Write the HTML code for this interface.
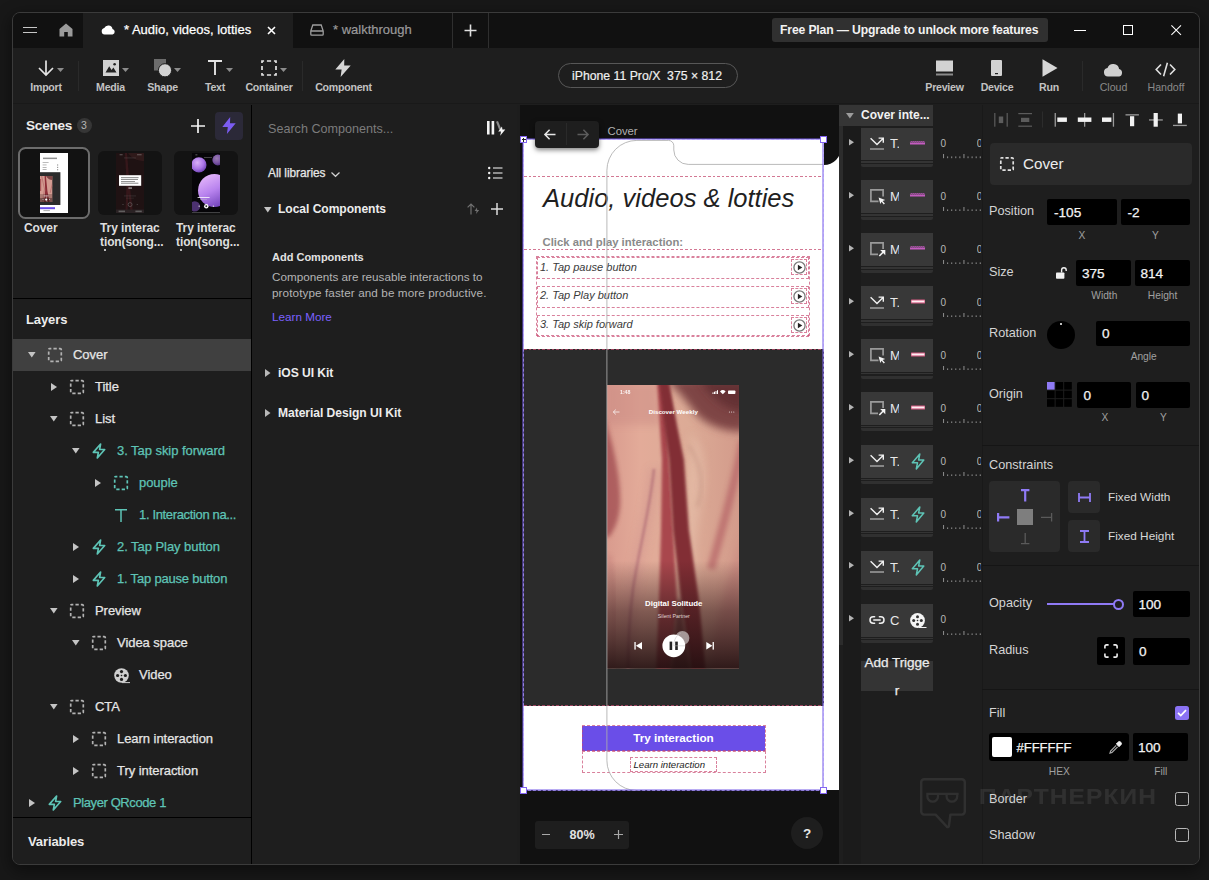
<!DOCTYPE html>
<html lang="en">
<head>
<meta charset="utf-8">
<title>Audio, videos, lotties</title>
<style>
*{box-sizing:border-box;margin:0;padding:0}
html,body{width:1209px;height:880px;overflow:hidden;background:#181818}
body{font-family:"Liberation Sans",sans-serif;color:#e6e6e6;font-size:13px;position:relative;-webkit-font-smoothing:antialiased}
.abs{position:absolute}
#win{position:absolute;left:12px;top:12px;width:1188px;height:853px;background:#1e1e1e;border:1px solid #3b3b3b;border-radius:8px;overflow:hidden;box-shadow:0 5px 16px 2px rgba(0,0,0,.42)}
/* everything inside #win is positioned in PAGE coordinates via this shim */
#pg{position:absolute;left:-13px;top:-13px;width:1209px;height:880px}
#pg *{position:absolute}
.t{white-space:nowrap;line-height:1}
svg{overflow:visible}
/* tab bar */
#tabbar{left:13px;top:13px;width:1187px;height:35px;background:#111}
#tab1{left:83px;top:13px;width:210px;height:35px;background:#1e1e1e}
.vsep{width:1px;background:#2f2f2f}
/* toolbar */
#toolbar{left:13px;top:48px;width:1187px;height:55px;background:#1e1e1e}
.tl{font-size:10.6px;color:#c2c2c2;font-weight:bold;letter-spacing:-.25px;transform:translateX(-50%)}
.tl.dim{color:#8a8a8a}
.lt{font-size:13px;letter-spacing:-.05px;-webkit-text-stroke:.25px currentColor}
.db{border:1px dashed rgba(200,70,110,.68)}
</style>
</head>
<body>
<div id="win"><div id="pg">

<!-- ============ TAB BAR ============ -->
<div id="tabbar"></div>
<div id="tab1"></div>
<div class="vsep" style="left:452px;top:13px;height:35px"></div>
<div class="vsep" style="left:488px;top:13px;height:35px"></div>
<!-- hamburger -->
<div style="left:23px;top:27px;width:14px;height:1px;background:#c6c6c6"></div>
<div style="left:23px;top:32.4px;width:14px;height:1px;background:#c6c6c6"></div>
<!-- home -->
<svg style="left:59px;top:23px" width="14" height="14" viewBox="0 0 14 14"><path d="M0.5 6 L7 0.5 L13.5 6 V13.5 H8.8 V9 H5.2 V13.5 H0.5 Z" fill="#9a9a9a"/></svg>
<!-- cloud -->
<svg style="left:101px;top:24px" width="15" height="11" viewBox="0 0 15 11"><path d="M3.6 10.6 a3.3 3.3 0 0 1 -.3 -6.5 a4.3 4.3 0 0 1 8.2 .9 a2.9 2.9 0 0 1 .1 5.6 z" fill="#fff"/></svg>
<div class="t" style="left:124px;top:23px;font-size:13px;color:#fff;-webkit-text-stroke:.25px #fff">* Audio, videos, lotties</div>
<svg style="left:267px;top:26px" width="9" height="9" viewBox="0 0 9 9"><path d="M1 1 L8 8 M8 1 L1 8" stroke="#fff" stroke-width="1.6" fill="none"/></svg>
<!-- drive icon -->
<svg style="left:310px;top:24px" width="14" height="12" viewBox="0 0 14 12"><path d="M0.8 7 L2.8 1 H11.2 L13.2 7 V10.2 a.9 .9 0 0 1 -.9 .9 H1.7 a.9 .9 0 0 1 -.9 -.9 Z M0.8 7 H13.2" fill="none" stroke="#9e9e9e" stroke-width="1.3"/></svg>
<div class="t" style="left:333px;top:23px;font-size:13px;color:#9a9a9a;-webkit-text-stroke:.2px #9a9a9a">* walkthrough</div>
<svg style="left:464px;top:24px" width="13" height="13" viewBox="0 0 13 13"><path d="M6.5 0.5 V12.5 M0.5 6.5 H12.5" stroke="#e0e0e0" stroke-width="1.6" fill="none"/></svg>
<!-- upgrade -->
<div style="left:772px;top:18px;width:276px;height:24px;background:#303030;border-radius:3px"></div>
<div class="t" style="left:780px;top:23.5px;font-size:12.2px;color:#f2f2f2;font-weight:bold;letter-spacing:-.15px">Free Plan — Upgrade to unlock more features</div>
<!-- window controls -->
<div style="left:1074px;top:30px;width:12.4px;height:1px;background:#fff"></div>
<div style="left:1123px;top:25px;width:10.4px;height:10.2px;border:1.2px solid #fff"></div>
<svg style="left:1171px;top:25px" width="10.4" height="10.4" viewBox="0 0 10.4 10.4"><path d="M0.4 0.4 L10 10 M10 0.4 L0.4 10" stroke="#fff" stroke-width="1.05" fill="none"/></svg>

<!-- ============ TOOLBAR ============ -->
<div id="toolbar"></div>
<div style="left:13px;top:103px;width:1187px;height:2px;background:#1e1e1e"></div><div style="left:13px;top:103px;width:1187px;height:1px;background:#191919"></div>
<div class="vsep" style="left:78px;top:61px;height:30px;background:#2a2a2a"></div>
<div class="vsep" style="left:302px;top:61px;height:30px;background:#2a2a2a"></div>
<div class="vsep" style="left:1082px;top:61px;height:30px;background:#2a2a2a"></div>
<!-- Import -->
<svg style="left:38px;top:60px" width="16" height="16" viewBox="0 0 16 16"><path d="M8 0.5 V14.5 M1 8 L8 15 L15 8" fill="none" stroke="#e4e4e4" stroke-width="1.7"/></svg>
<svg class="dd" style="left:57px;top:68px" width="7" height="4" viewBox="0 0 7 4"><path d="M0 0 H7 L3.5 4 Z" fill="#8c8c8c"/></svg>
<div class="t tl" style="left:46px;top:82px">Import</div>
<!-- Media -->
<svg style="left:103px;top:60px" width="16" height="16" viewBox="0 0 16 16"><rect width="16" height="16" fill="#d2d2d2"/><path d="M2.5 12.5 L6.2 6.2 L8.6 10 L10.4 7.6 L13.5 12.5 Z" fill="#222"/><circle cx="11.6" cy="4.3" r="1.3" fill="#222"/></svg>
<svg class="dd" style="left:122px;top:68px" width="7" height="4" viewBox="0 0 7 4"><path d="M0 0 H7 L3.5 4 Z" fill="#8c8c8c"/></svg>
<div class="t tl" style="left:110.5px;top:82px">Media</div>
<!-- Shape -->
<svg style="left:154px;top:59px" width="19" height="19" viewBox="0 0 19 19"><rect x="0" y="0" width="12" height="11.5" fill="#6c6c6c"/><circle cx="11" cy="11.3" r="6.6" fill="#d2d2d2" stroke="#1e1e1e" stroke-width="1"/></svg>
<svg class="dd" style="left:174px;top:68px" width="7" height="4" viewBox="0 0 7 4"><path d="M0 0 H7 L3.5 4 Z" fill="#8c8c8c"/></svg>
<div class="t tl" style="left:162.5px;top:82px">Shape</div>
<!-- Text -->
<svg style="left:208px;top:60px" width="14" height="15" viewBox="0 0 14 15"><path d="M0 1 H14 M7 1 V15" fill="none" stroke="#e4e4e4" stroke-width="1.9"/></svg>
<svg class="dd" style="left:226px;top:68px" width="7" height="4" viewBox="0 0 7 4"><path d="M0 0 H7 L3.5 4 Z" fill="#8c8c8c"/></svg>
<div class="t tl" style="left:215px;top:82px">Text</div>
<!-- Container -->
<svg style="left:261px;top:60px" width="16" height="16" viewBox="0 0 16 16"><rect x="1" y="1" width="14" height="14" fill="none" stroke="#e4e4e4" stroke-width="1.7" stroke-dasharray="4.2 2.8" stroke-dashoffset="2.1"/></svg>
<svg class="dd" style="left:280px;top:68px" width="7" height="4" viewBox="0 0 7 4"><path d="M0 0 H7 L3.5 4 Z" fill="#8c8c8c"/></svg>
<div class="t tl" style="left:269px;top:82px">Container</div>
<!-- Component -->
<svg style="left:335px;top:59px" width="16" height="18" viewBox="0 0 16 18"><path d="M9.3 0 L0.3 10.6 H6.6 L5.6 18 L15.7 6.6 H9.2 Z" fill="#d6d6d6"/></svg>
<div class="t tl" style="left:343.5px;top:82px">Component</div>
<!-- device pill -->
<div style="left:558px;top:63px;width:180px;height:25px;border:1px solid #575757;border-radius:13px"></div>
<div class="t" style="left:572px;top:69.8px;font-size:12.25px;color:#f0f0f0;white-space:pre;-webkit-text-stroke:.2px #f0f0f0">iPhone 11 Pro/X  375 × 812</div>
<!-- Preview -->
<svg style="left:936px;top:60px" width="17" height="16" viewBox="0 0 17 16"><rect x="0" y="0.5" width="17" height="11" fill="#d2d2d2"/><rect x="0" y="13.5" width="17" height="2" fill="#8a8a8a"/></svg>
<div class="t tl" style="left:944.5px;top:82px">Preview</div>
<!-- Device -->
<svg style="left:991px;top:60px" width="11" height="16" viewBox="0 0 11 16"><rect width="11" height="16" rx="1" fill="#d2d2d2"/><rect x="4" y="13" width="3" height="1.2" fill="#222"/></svg>
<div class="t tl" style="left:997px;top:82px">Device</div>
<!-- Run -->
<svg style="left:1042px;top:59px" width="16" height="18" viewBox="0 0 16 18"><path d="M0.5 0.3 L15.5 9 L0.5 17.7 Z" fill="#d6d6d6"/></svg>
<div class="t tl" style="left:1049px;top:82px">Run</div>
<!-- Cloud -->
<svg style="left:1103px;top:63px" width="21" height="14" viewBox="0 0 21 14"><path d="M5 13.6 a4.4 4.4 0 0 1 -.5 -8.7 a6 6 0 0 1 11.6 1.2 a3.9 3.9 0 0 1 .2 7.5 z" fill="#cfcfcf"/></svg>
<div class="t tl dim" style="left:1113.5px;top:82px;font-weight:normal;letter-spacing:0">Cloud</div>
<!-- Handoff -->
<svg style="left:1155px;top:62px" width="21" height="15" viewBox="0 0 21 15"><path d="M6 2.5 L1.2 7.5 L6 12.5 M15 2.5 L19.8 7.5 L15 12.5 M12.4 0.8 L8.6 14.2" fill="none" stroke="#e0e0e0" stroke-width="1.6"/></svg>
<div class="t tl dim" style="left:1166px;top:82px;font-weight:normal;letter-spacing:0">Handoff</div>
<!--TOOLBAR-ITEMS-->

<!-- ============ LEFT PANEL ============ -->
<div style="left:13px;top:105px;width:238px;height:760px;background:#1e1e1e"></div>
<div style="left:251px;top:104.6px;width:1.1px;height:761px;background:#000"></div><div style="left:252px;top:104px;width:1px;height:761px;background:#1e1e1e"></div>
<div class="t" style="left:26px;top:118px;font-size:13.6px;font-weight:bold;color:#ececec;letter-spacing:-.25px;margin-top:.5px">Scenes</div>
<div style="left:76.5px;top:117.5px;width:15px;height:15px;border-radius:8px;background:#363636"></div>
<div class="t" style="left:81px;top:120px;font-size:10.5px;color:#b5b5b5">3</div>
<svg style="left:191px;top:119px" width="14" height="14" viewBox="0 0 14 14"><path d="M7 0 V14 M0 7 H14" stroke="#f2f2f2" stroke-width="1.7" fill="none"/></svg>
<div style="left:215px;top:112px;width:28px;height:28px;border-radius:4px;background:#2b2938"></div>
<svg style="left:222px;top:117px" width="14" height="17" viewBox="0 0 14 17"><path d="M8.2 0 L0.3 10 H5.8 L4.9 17 L13.7 6.3 H8 Z" fill="#7b5cf2"/></svg>
<div style="left:18.3px;top:146.8px;width:71.8px;height:72px;border:2px solid #6c6c6c;border-radius:7.5px;background:#121212"></div>
<div style="left:98px;top:151px;width:64px;height:64px;border-radius:6px;background:#131313"></div>
<div style="left:174px;top:151px;width:64px;height:64px;border-radius:6px;background:#131313"></div>
<!-- thumb 1 -->
<svg style="left:39.8px;top:152.6px;overflow:hidden" width="28.4" height="60.4" viewBox="0 0 28.4 60.4">
<defs><filter id="tb" x="-20%" y="-20%" width="140%" height="140%"><feGaussianBlur stdDeviation=".5"/></filter>
<linearGradient id="pg2" x1=".2" y1="0" x2=".7" y2="1"><stop offset="0" stop-color="#e6b8fb"/><stop offset=".5" stop-color="#b883ee"/><stop offset="1" stop-color="#6e40b8"/></linearGradient><radialGradient id="pg1" cx=".4" cy=".35" r=".7"><stop offset="0" stop-color="#d9b0f8"/><stop offset=".6" stop-color="#a974e6"/><stop offset="1" stop-color="#6a3fb0"/></radialGradient></defs>
<rect width="28.4" height="60.4" fill="#fff"/>
<rect x="3" y="4.6" width="14" height="1.5" fill="#777" opacity=".8"/>
<rect x="2.6" y="9" width="6" height=".8" fill="#aaa"/>
<rect x="2.6" y="11.6" width="4" height=".7" fill="#999"/><rect x="2.6" y="14" width="4" height=".7" fill="#999"/><rect x="2.6" y="16.3" width="4" height=".7" fill="#999"/>
<rect x="17" y="11.4" width="1.2" height="1.2" fill="#999"/><rect x="17" y="13.8" width="1.2" height="1.2" fill="#999"/><rect x="17" y="16.1" width="1.2" height="1.2" fill="#999"/>
<rect x="0" y="19.2" width="20.4" height="32.8" fill="#2c2c2c"/>
<rect x="0" y="23" width="12.3" height="26" fill="#d49c92"/>
<g filter="url(#tb)"><path d="M4.6 23 L5.9 23 L7.4 38 L9.6 49 L7.8 49 L6.6 41 L5.8 49 L4.2 49 L5.2 37 Z" fill="#8d2e38"/><path d="M6 23 H12.3 V27 C10 27 8 26 6 23 Z" fill="#7e4545"/><rect x="0" y="26" width="1.2" height="12" fill="#a9585a"/><path d="M1 23 L4 36 L2 49 L3.4 49 L5 36 L2.2 23 Z" fill="#b36a68" opacity=".7"/><path d="M12 30 L9.6 40 L10.6 40 L12.3 33 Z" fill="#b36a68" opacity=".7"/></g>
<rect x="0" y="41" width="12.3" height="4" fill="#2a1212" opacity=".25"/><rect x="0" y="45" width="12.3" height="4" fill="#2a1212" opacity=".55"/>
<circle cx="6.2" cy="46.6" r="1.1" fill="#fff"/><rect x="2.6" y="46.2" width=".8" height=".8" fill="#ddd"/><rect x="9" y="46.2" width=".8" height=".8" fill="#ddd"/><rect x="3.6" y="42.6" width="5" height=".7" fill="#fff" opacity=".8"/>
<rect x="0" y="54.2" width="15" height="2" fill="#6a4ee8"/>
<rect x="3.4" y="57.4" width="6.5" height=".7" fill="#888"/>
</svg>
<!-- thumb 2 -->
<svg style="left:115.8px;top:152.6px;overflow:hidden" width="28.2" height="60.4" viewBox="0 0 28.2 60.4">
<rect width="28.2" height="60.4" fill="#1f1213"/>
<g filter="url(#tb)" opacity=".55"><path d="M9 0 L11 0 L13.5 30 L17 60 L14.6 60 L12.6 40 L11.4 60 L9.4 60 L10.6 30 Z" fill="#4a1c22"/><path d="M12 0 H28.2 V8 C22 8 16 6 12 0 Z" fill="#3c2022"/></g>
<rect x="3.6" y="1.4" width="3" height=".8" fill="#aaa" opacity=".6"/><rect x="21" y="1.4" width="4.6" height=".8" fill="#aaa" opacity=".6"/>
<rect x="8" y="4.6" width="12" height=".7" fill="#777" opacity=".4"/>
<rect x="3" y="22.2" width="22.2" height="10.6" fill="#fff"/>
<rect x="5" y="24.4" width="17.6" height=".7" fill="#555"/><rect x="5" y="26.2" width="17" height=".7" fill="#666"/><rect x="5" y="28" width="14" height=".7" fill="#666"/><rect x="5" y="29.8" width="17.4" height=".7" fill="#555"/>
<rect x="12.4" y="34.6" width="3.6" height=".9" fill="#ddd"/>
<rect x="8" y="42.6" width="12" height=".7" fill="#777" opacity=".35"/><rect x="10" y="44.8" width="8" height=".6" fill="#777" opacity=".3"/>
<circle cx="14.1" cy="51.6" r="2" fill="none" stroke="#777" stroke-width=".5"/><circle cx="7" cy="51.6" r=".5" fill="#666"/><circle cx="21.2" cy="51.6" r=".5" fill="#666"/>
<rect x="0" y="56.6" width="28.2" height="3.8" fill="#2a2224"/><rect x="2.6" y="57.6" width="6.4" height="1.6" fill="#777" opacity=".7"/><rect x="19.4" y="57.6" width="6.4" height="1.6" fill="#777" opacity=".7"/>
</svg>
<!-- thumb 3 -->
<svg style="left:191.6px;top:152.6px;overflow:hidden" width="28.4" height="60.4" viewBox="0 0 28.4 60.4">
<rect width="28.4" height="60.4" fill="#060508"/>
<circle cx="6.9" cy="11.9" r="7.6" fill="url(#pg1)"/>
<circle cx="25.8" cy="7" r="5.4" fill="url(#pg1)" opacity=".7"/>
<circle cx="22.5" cy="37.5" r="16.5" fill="url(#pg2)"/>
<circle cx="2.9" cy="53.4" r="5.2" fill="#6b459c" opacity=".7"/>
<rect x="5.6" y="44" width="12" height=".9" fill="#fff" opacity=".85"/><rect x="8" y="46.4" width="7" height=".6" fill="#ccc" opacity=".6"/>
<circle cx="14.3" cy="53.2" r="2.2" fill="#fff"/><rect x="13.5" y="52.3" width="1.6" height="1.8" fill="#333"/>
<rect x="6.6" y="52.6" width="1.2" height="1.2" fill="#ddd"/><rect x="20.8" y="52.6" width="1.2" height="1.2" fill="#ddd"/>
<rect x="0" y="59.4" width="28.4" height=".8" fill="#aaa" opacity=".6"/>
<rect x="3.4" y="1.6" width="2" height=".6" fill="#ccc" opacity=".7"/><rect x="12" y="4.2" width="8" height=".6" fill="#ccc" opacity=".5"/>
</svg>
<div class="t" style="left:24px;top:222px;font-size:12px;font-weight:bold;color:#dedede;letter-spacing:-.1px">Cover</div>
<div class="t" style="left:100px;top:222px;font-size:12px;font-weight:bold;color:#dedede;letter-spacing:-.1px">Try interac</div>
<div class="t" style="left:100px;top:236px;font-size:12px;font-weight:bold;color:#dedede;letter-spacing:-.1px">tion(song...</div>
<div class="t" style="left:176px;top:222px;font-size:12px;font-weight:bold;color:#dedede;letter-spacing:-.1px">Try interac</div>
<div class="t" style="left:176px;top:236px;font-size:12px;font-weight:bold;color:#dedede;letter-spacing:-.1px">tion(song...</div>
<div style="left:104px;top:249px;width:1.5px;height:1.5px;background:#bbb"></div>
<div style="left:180px;top:249px;width:1.5px;height:1.5px;background:#bbb"></div>
<div style="left:13px;top:298px;width:238px;height:1px;background:#000"></div>
<div class="t" style="left:26px;top:312.5px;font-size:13px;font-weight:bold;color:#ececec;letter-spacing:-.1px">Layers</div>
<div style="left:13px;top:339px;width:238px;height:32px;background:#404040"></div>
<svg style="left:28.2px;top:352.3px" width="7.6" height="5.4" viewBox="0 0 7.6 5.4"><path d="M0 0 H7.6 L3.8 5.4 Z" fill="#c4c4c4"/></svg>
<svg style="left:48px;top:348px" width="14" height="14" viewBox="0 0 14 14"><rect x=".7" y=".7" width="12.6" height="12.6" rx="1" fill="none" stroke="#b2b2b2" stroke-width="1.7" stroke-dasharray="3.3 2.1" stroke-dashoffset="1.65"/></svg>
<div class="t lt" style="left:73px;top:348px;color:#e6e6e6">Cover</div>
<svg style="left:51px;top:383px" width="6" height="8" viewBox="0 0 6 8"><path d="M0 0 L6 4 L0 8 Z" fill="#c4c4c4"/></svg>
<svg style="left:70px;top:380px" width="14" height="14" viewBox="0 0 14 14"><rect x=".7" y=".7" width="12.6" height="12.6" rx="1" fill="none" stroke="#b2b2b2" stroke-width="1.7" stroke-dasharray="3.3 2.1" stroke-dashoffset="1.65"/></svg>
<div class="t lt" style="left:95px;top:380px;color:#e6e6e6">Title</div>
<svg style="left:50.2px;top:416.3px" width="7.6" height="5.4" viewBox="0 0 7.6 5.4"><path d="M0 0 H7.6 L3.8 5.4 Z" fill="#c4c4c4"/></svg>
<svg style="left:70px;top:412px" width="14" height="14" viewBox="0 0 14 14"><rect x=".7" y=".7" width="12.6" height="12.6" rx="1" fill="none" stroke="#b2b2b2" stroke-width="1.7" stroke-dasharray="3.3 2.1" stroke-dashoffset="1.65"/></svg>
<div class="t lt" style="left:95px;top:412px;color:#e6e6e6">List</div>
<svg style="left:72.2px;top:448.3px" width="7.6" height="5.4" viewBox="0 0 7.6 5.4"><path d="M0 0 H7.6 L3.8 5.4 Z" fill="#c4c4c4"/></svg>
<svg style="left:92px;top:443px" width="14" height="16" viewBox="0 0 14 16"><path d="M8.6 1 L1.3 9.4 H6.4 L5.3 15 L12.7 6.5 H7.6 Z" fill="none" stroke="#5ec4b6" stroke-width="1.65" stroke-linejoin="round"/></svg>
<div class="t lt" style="left:117px;top:444px;color:#5ec4b6">3. Tap skip forward</div>
<svg style="left:95px;top:479px" width="6" height="8" viewBox="0 0 6 8"><path d="M0 0 L6 4 L0 8 Z" fill="#c4c4c4"/></svg>
<svg style="left:114px;top:476px" width="14" height="14" viewBox="0 0 14 14"><rect x=".7" y=".7" width="12.6" height="12.6" rx="1" fill="none" stroke="#5ec4b6" stroke-width="1.7" stroke-dasharray="3.3 2.1" stroke-dashoffset="1.65"/></svg>
<div class="t lt" style="left:139px;top:476px;color:#5ec4b6">pouple</div>
<svg style="left:115px;top:508.5px" width="12" height="13" viewBox="0 0 12 13"><path d="M0 .8 H12 M6 .8 V13" fill="none" stroke="#5ec4b6" stroke-width="1.5"/></svg>
<div class="t lt" style="left:139px;top:508px;color:#5ec4b6;letter-spacing:-.35px">1. Interaction na...</div>
<svg style="left:73px;top:543px" width="6" height="8" viewBox="0 0 6 8"><path d="M0 0 L6 4 L0 8 Z" fill="#c4c4c4"/></svg>
<svg style="left:92px;top:539px" width="14" height="16" viewBox="0 0 14 16"><path d="M8.6 1 L1.3 9.4 H6.4 L5.3 15 L12.7 6.5 H7.6 Z" fill="none" stroke="#5ec4b6" stroke-width="1.65" stroke-linejoin="round"/></svg>
<div class="t lt" style="left:117px;top:540px;color:#5ec4b6">2. Tap Play button</div>
<svg style="left:73px;top:575px" width="6" height="8" viewBox="0 0 6 8"><path d="M0 0 L6 4 L0 8 Z" fill="#c4c4c4"/></svg>
<svg style="left:92px;top:571px" width="14" height="16" viewBox="0 0 14 16"><path d="M8.6 1 L1.3 9.4 H6.4 L5.3 15 L12.7 6.5 H7.6 Z" fill="none" stroke="#5ec4b6" stroke-width="1.65" stroke-linejoin="round"/></svg>
<div class="t lt" style="left:117px;top:572px;color:#5ec4b6;letter-spacing:-.2px">1. Tap pause button</div>
<svg style="left:50.2px;top:608.3px" width="7.6" height="5.4" viewBox="0 0 7.6 5.4"><path d="M0 0 H7.6 L3.8 5.4 Z" fill="#c4c4c4"/></svg>
<svg style="left:70px;top:604px" width="14" height="14" viewBox="0 0 14 14"><rect x=".7" y=".7" width="12.6" height="12.6" rx="1" fill="none" stroke="#b2b2b2" stroke-width="1.7" stroke-dasharray="3.3 2.1" stroke-dashoffset="1.65"/></svg>
<div class="t lt" style="left:95px;top:604px;color:#e6e6e6">Preview</div>
<svg style="left:72.2px;top:640.3px" width="7.6" height="5.4" viewBox="0 0 7.6 5.4"><path d="M0 0 H7.6 L3.8 5.4 Z" fill="#c4c4c4"/></svg>
<svg style="left:92px;top:636px" width="14" height="14" viewBox="0 0 14 14"><rect x=".7" y=".7" width="12.6" height="12.6" rx="1" fill="none" stroke="#b2b2b2" stroke-width="1.7" stroke-dasharray="3.3 2.1" stroke-dashoffset="1.65"/></svg>
<div class="t lt" style="left:117px;top:636px;color:#e6e6e6">Videa space</div>
<svg style="left:113.5px;top:667.5px" width="16" height="15" viewBox="0 0 16 15"><circle cx="7.5" cy="7.5" r="7.3" fill="#cfcfcf"/><circle cx="7.5" cy="3.6" r="1.6" fill="#1e1e1e"/><circle cx="7.5" cy="11.4" r="1.6" fill="#1e1e1e"/><circle cx="3.6" cy="7.5" r="1.6" fill="#1e1e1e"/><circle cx="11.4" cy="7.5" r="1.6" fill="#1e1e1e"/><circle cx="7.5" cy="7.5" r=".8" fill="#1e1e1e"/><path d="M8 14.6 H16" stroke="#cfcfcf" stroke-width="1"/></svg>
<div class="t lt" style="left:139px;top:668px;color:#e6e6e6">Video</div>
<svg style="left:50.2px;top:704.3px" width="7.6" height="5.4" viewBox="0 0 7.6 5.4"><path d="M0 0 H7.6 L3.8 5.4 Z" fill="#c4c4c4"/></svg>
<svg style="left:70px;top:700px" width="14" height="14" viewBox="0 0 14 14"><rect x=".7" y=".7" width="12.6" height="12.6" rx="1" fill="none" stroke="#b2b2b2" stroke-width="1.7" stroke-dasharray="3.3 2.1" stroke-dashoffset="1.65"/></svg>
<div class="t lt" style="left:95px;top:700px;color:#e6e6e6">CTA</div>
<svg style="left:73px;top:735px" width="6" height="8" viewBox="0 0 6 8"><path d="M0 0 L6 4 L0 8 Z" fill="#c4c4c4"/></svg>
<svg style="left:92px;top:732px" width="14" height="14" viewBox="0 0 14 14"><rect x=".7" y=".7" width="12.6" height="12.6" rx="1" fill="none" stroke="#b2b2b2" stroke-width="1.7" stroke-dasharray="3.3 2.1" stroke-dashoffset="1.65"/></svg>
<div class="t lt" style="left:117px;top:732px;color:#e6e6e6">Learn interaction</div>
<svg style="left:73px;top:767px" width="6" height="8" viewBox="0 0 6 8"><path d="M0 0 L6 4 L0 8 Z" fill="#c4c4c4"/></svg>
<svg style="left:92px;top:764px" width="14" height="14" viewBox="0 0 14 14"><rect x=".7" y=".7" width="12.6" height="12.6" rx="1" fill="none" stroke="#b2b2b2" stroke-width="1.7" stroke-dasharray="3.3 2.1" stroke-dashoffset="1.65"/></svg>
<div class="t lt" style="left:117px;top:764px;color:#e6e6e6">Try interaction</div>
<svg style="left:29px;top:799px" width="6" height="8" viewBox="0 0 6 8"><path d="M0 0 L6 4 L0 8 Z" fill="#c4c4c4"/></svg>
<svg style="left:48px;top:795px" width="14" height="16" viewBox="0 0 14 16"><path d="M8.6 1 L1.3 9.4 H6.4 L5.3 15 L12.7 6.5 H7.6 Z" fill="none" stroke="#5ec4b6" stroke-width="1.65" stroke-linejoin="round"/></svg>
<div class="t lt" style="left:73px;top:796px;color:#5ec4b6;letter-spacing:-.4px">Player QRcode 1</div>
<div style="left:13px;top:817px;width:238px;height:1px;background:#000"></div>
<div class="t" style="left:28px;top:834.5px;font-size:13px;font-weight:bold;color:#ececec;letter-spacing:-.1px">Variables</div>
<!-- ============ COMPONENTS PANEL ============ -->
<div style="left:253px;top:105px;width:264px;height:760px;background:#1e1e1e"></div>
<div style="left:516.5px;top:105px;width:3.5px;height:760px;background:#1d1d1d"></div>
<div class="t" style="left:268px;top:123px;font-size:12.6px;color:#7c7c7c">Search Components...</div>
<svg style="left:487px;top:121px" width="19" height="15" viewBox="0 0 19 15"><rect x="0" y="0" width="2.6" height="13.5" fill="#f4f4f4"/><rect x="4.6" y="0" width="2.6" height="13.5" fill="#f4f4f4"/><path d="M9 .8 L11 0 L14.3 8 L12.2 8.8 Z" fill="#8a8a8a"/><path d="M15 5.5 L11.2 10.6 H14 L13.2 14.8 L18.3 8.6 H15.4 Z" fill="#f4f4f4"/></svg>
<div class="t lt" style="left:268px;top:168px;font-size:11.9px;color:#e8e8e8">All libraries</div>
<svg style="left:331px;top:171.5px" width="9" height="5" viewBox="0 0 9 5"><path d="M.5 .5 L4.5 4.3 L8.5 .5" fill="none" stroke="#cfcfcf" stroke-width="1.2"/></svg>
<svg style="left:488px;top:166px" width="15" height="14" viewBox="0 0 15 14"><g fill="#f0f0f0"><circle cx="1.2" cy="2" r="1.2"/><circle cx="1.2" cy="7" r="1.2"/><circle cx="1.2" cy="12" r="1.2"/></g><g fill="#9a9a9a"><rect x="5" y="1.1" width="9.5" height="1.8"/><rect x="5" y="6.1" width="9.5" height="1.8"/><rect x="5" y="11.1" width="9.5" height="1.8"/></g></svg>
<svg style="left:263.5px;top:206.5px" width="7.6" height="5.4" viewBox="0 0 7.6 5.4"><path d="M0 0 H7.6 L3.8 5.4 Z" fill="#c4c4c4"/></svg>
<div class="t" style="left:278px;top:202.5px;font-size:12.1px;font-weight:bold;color:#ececec;letter-spacing:-.05px">Local Components</div>
<svg style="left:467px;top:203px" width="13" height="12" viewBox="0 0 13 12"><path d="M4 11.5 V1 M.6 4.4 L4 1 L7.4 4.4" fill="none" stroke="#707070" stroke-width="1.2"/><path d="M10 4.5 L7.6 8 H9.6 L9 11 L12.2 7 H10.2 Z" fill="#707070"/></svg>
<svg style="left:491px;top:203px" width="12" height="12" viewBox="0 0 12 12"><path d="M6 0 V12 M0 6 H12" stroke="#dcdcdc" stroke-width="1.5" fill="none"/></svg>
<div class="t" style="left:272px;top:251.5px;font-size:11px;font-weight:bold;color:#e2e2e2">Add Components</div>
<div class="t" style="left:272px;top:271px;font-size:11.7px;color:#b4b4b4">Components are reusable interactions to</div>
<div class="t" style="left:272px;top:287px;font-size:11.7px;letter-spacing:.1px;color:#b4b4b4">prototype faster and be more productive.</div>
<div class="t" style="left:272px;top:311px;font-size:11.7px;color:#7b61ff">Learn More</div>
<svg style="left:264.5px;top:368.5px" width="5.5" height="8" viewBox="0 0 5.5 8"><path d="M0 0 L5.5 4 L0 8 Z" fill="#b8b8b8"/></svg>
<div class="t" style="left:278px;top:367px;font-size:12.1px;font-weight:bold;color:#ececec;letter-spacing:-.05px">iOS UI Kit</div>
<svg style="left:264.5px;top:408.5px" width="5.5" height="8" viewBox="0 0 5.5 8"><path d="M0 0 L5.5 4 L0 8 Z" fill="#b8b8b8"/></svg>
<div class="t" style="left:278px;top:407px;font-size:12.1px;font-weight:bold;color:#ececec;letter-spacing:-.05px">Material Design UI Kit</div>
<!-- ============ CANVAS ============ -->
<div id="canvas" style="left:520px;top:105px;width:319px;height:760px;background:#111;overflow:hidden"></div>
<div style="left:823px;top:139px;width:16px;height:651px;background:#fff"></div>
<div style="left:823px;top:130px;width:18px;height:34.5px;background:#111;border-bottom-right-radius:17px"></div>
<div style="left:523px;top:139px;width:301px;height:651px;background:#fff"></div>
<div style="left:524px;top:176px;width:299px;height:1px;background:repeating-linear-gradient(90deg,rgba(196,75,112,.75) 0 2.6px,transparent 2.6px 4.6px)"></div>
<div style="left:524px;top:249px;width:299px;height:1px;background:repeating-linear-gradient(90deg,rgba(196,75,112,.75) 0 2.6px,transparent 2.6px 4.6px)"></div>
<div class="t" style="left:543px;top:185.6px;font-size:25.6px;font-style:italic;color:#1f1f1f;letter-spacing:-.02px">Audio, videos &amp; lotties</div>
<div class="t" style="left:542.5px;top:237px;font-size:11.3px;font-weight:bold;color:#8a8a8a">Click and play interaction:</div>
<div class="db" style="left:535.5px;top:256px;width:274.5px;height:80px;"></div>
<div class="db" style="left:536.5px;top:256.5px;width:272px;height:22px;"></div>
<div class="db" style="left:791px;top:259px;width:16px;height:16px;"></div>
<svg style="left:792.5px;top:260.7px" width="13" height="13" viewBox="0 0 13 13"><circle cx="6.5" cy="6.5" r="5.6" fill="#fff" stroke="#787878" stroke-width="1.3"/><path d="M4.9 3.7 L9.3 6.5 L4.9 9.3 Z" fill="#222"/></svg>
<div class="t" style="left:540px;top:261.5px;font-size:11px;font-style:italic;color:#3a3a3a">1. Tap pause button</div>
<div class="db" style="left:536.5px;top:285.5px;width:272px;height:22px;"></div>
<div class="db" style="left:791px;top:288px;width:16px;height:16px;"></div>
<svg style="left:792.5px;top:289.7px" width="13" height="13" viewBox="0 0 13 13"><circle cx="6.5" cy="6.5" r="5.6" fill="#fff" stroke="#787878" stroke-width="1.3"/><path d="M4.9 3.7 L9.3 6.5 L4.9 9.3 Z" fill="#222"/></svg>
<div class="t" style="left:540px;top:289.8px;font-size:11px;font-style:italic;color:#3a3a3a">2. Tap Play button</div>
<div class="db" style="left:536.5px;top:314.5px;width:272px;height:22px;"></div>
<div class="db" style="left:791px;top:317px;width:16px;height:16px;"></div>
<svg style="left:792.5px;top:318.7px" width="13" height="13" viewBox="0 0 13 13"><circle cx="6.5" cy="6.5" r="5.6" fill="#fff" stroke="#787878" stroke-width="1.3"/><path d="M4.9 3.7 L9.3 6.5 L4.9 9.3 Z" fill="#222"/></svg>
<div class="t" style="left:540px;top:318.5px;font-size:11px;font-style:italic;color:#3a3a3a">3. Tap skip forward</div>
<div style="left:523px;top:349px;width:300.6px;height:356.5px;background:#2b2b2b"></div>
<div style="left:524px;top:349px;width:299px;height:1px;background:repeating-linear-gradient(90deg,rgba(196,75,112,.75) 0 2.6px,transparent 2.6px 4.6px)"></div>
<div style="left:524px;top:705px;width:299px;height:1px;background:repeating-linear-gradient(90deg,rgba(196,75,112,.75) 0 2.6px,transparent 2.6px 4.6px)"></div>
<svg style="left:606.5px;top:385.3px;overflow:hidden" width="132.5" height="283.5" viewBox="0 0 132.5 283.5">
<defs>
<linearGradient id="vbg" x1="0" y1="0" x2="1" y2="0"><stop offset="0" stop-color="#d99b8e"/><stop offset=".25" stop-color="#e3ab99"/><stop offset=".62" stop-color="#dcab96"/><stop offset="1" stop-color="#d39b8b"/></linearGradient>
<linearGradient id="vdark" x1="0" y1="0" x2="0" y2="1"><stop offset="0" stop-color="#2a1212" stop-opacity="0"/><stop offset=".62" stop-color="#2a1212" stop-opacity="0"/><stop offset=".8" stop-color="#2c1516" stop-opacity=".54"/><stop offset="1" stop-color="#1e0d0e" stop-opacity=".9"/></linearGradient>
<filter id="b2" x="-20%" y="-20%" width="140%" height="140%"><feGaussianBlur stdDeviation="2"/></filter>
<filter id="b4" x="-30%" y="-30%" width="160%" height="160%"><feGaussianBlur stdDeviation="4.5"/></filter>
<filter id="b1" x="-20%" y="-20%" width="140%" height="140%"><feGaussianBlur stdDeviation="1"/></filter><filter id="b25" x="-30%" y="-30%" width="160%" height="160%"><feGaussianBlur stdDeviation="2.8"/></filter><filter id="b15" x="-20%" y="-20%" width="140%" height="140%"><feGaussianBlur stdDeviation="1.4"/></filter>
<clipPath id="vclip"><rect width="132.5" height="283.5"/></clipPath>
</defs>
<g clip-path="url(#vclip)">
<rect width="132.5" height="283.5" fill="url(#vbg)"/>
<!-- top-right dark fold -->
<path d="M58 -6 H140 V46 C122 48 102 42 90 30 C80 18 72 6 58 -6 Z" fill="#7e4545" filter="url(#b4)"/>
<path d="M92 -6 H140 V26 C124 28 106 16 92 -6 Z" fill="#5c2c2e" opacity=".75" filter="url(#b4)"/>
<!-- top-left slightly darker -->
<path d="M-4 -4 H52 L54 40 H-4 Z" fill="#c98882" opacity=".45" filter="url(#b4)"/>
<!-- light fold center-right -->
<path d="M84 48 C98 62 102 92 94 120 C90 140 86 170 90 200 L78 200 C74 160 76 110 80 84 Z" fill="#e6bea9" opacity=".65" filter="url(#b4)"/>
<path d="M82 60 C94 80 98 100 90 122" fill="none" stroke="#c0907f" stroke-width="3" opacity=".5" filter="url(#b2)"/>
<!-- left shadow stripe -->
<path d="M-4 28 C5 55 14 90 13 120 C12 134 8 144 2 152 L-4 152 Z" fill="#a9585a" opacity=".9" filter="url(#b2)"/>
<path d="M47 84 C43 124 32 164 26 204 C22 234 21 262 21 290" fill="none" stroke="#c98c8a" stroke-width="9" opacity=".4" filter="url(#b4)"/><path d="M47 84 C43 124 32 164 26 204 C22 234 21 262 21 290" fill="none" stroke="#b27078" stroke-width="2.6" opacity=".7" filter="url(#b1)"/>
<path d="M2 170 C8 210 8 245 6 290" fill="none" stroke="#b87070" stroke-width="5" opacity=".28" filter="url(#b2)"/>
<!-- right shadow -->
<path d="M136 56 C128 100 116 140 104 184" fill="none" stroke="#b05a60" stroke-width="8" opacity=".62" filter="url(#b25)"/>
<path d="M136 150 C122 190 108 230 102 290 L136 290 Z" fill="#c07c78" opacity=".5" filter="url(#b4)"/>
<!-- stripes -->
<path d="M50 -4 L58 -4 L62 75 L66 145 L70 215 L63 290 L49 290 L52 215 L54 145 L55 75 Z" fill="#a9474d" filter="url(#b15)"/>
<path d="M52 -4 L62 -4 L70 40 L77 75 L82 145 L92 215 L99 290 L85 290 L74 215 L66 145 L62 75 L56 30 Z" fill="#822e36" filter="url(#b15)"/>
<path d="M63 290 L70 215 L74 215 L85 290 Z" fill="#5e2a2e" opacity=".8" filter="url(#b2)"/>
<rect width="132.5" height="283.5" fill="url(#vdark)"/>
</g>
<!-- status bar -->
<text x="13" y="8.9" font-family="Liberation Sans, sans-serif" font-weight="bold" font-size="5.2" fill="#fff" opacity=".9">1:48</text>
<g fill="#fff"><rect x="105.5" y="7.4" width="1" height="1.6"/><rect x="107" y="6.7" width="1" height="2.3"/><rect x="108.5" y="6" width="1" height="3"/><rect x="110" y="5.2" width="1" height="3.8"/>
<path d="M113 6.4 a4 4 0 0 1 5.6 0 l-2.8 2.8 Z"/><rect x="121" y="5.4" width="7.4" height="3.6" rx=".8"/></g>
<!-- header -->
<path d="M12.5 27 H6.4 M8.8 24.6 L6.3 27 L8.8 29.4" fill="none" stroke="#fff" stroke-width=".8" opacity=".9"/>
<text x="66.3" y="29.3" text-anchor="middle" font-family="Liberation Sans, sans-serif" font-weight="bold" font-size="6.2" fill="#fff">Discover Weekly</text>
<g fill="#fff" opacity=".85"><circle cx="122.4" cy="27" r=".55"/><circle cx="124.6" cy="27" r=".55"/><circle cx="126.8" cy="27" r=".55"/></g>
<!-- song -->
<text x="66.8" y="221.2" text-anchor="middle" font-family="Liberation Sans, sans-serif" font-weight="bold" font-size="7.9" fill="#fff">Digital Solitude</text>
<text x="66.8" y="232.6" text-anchor="middle" font-family="Liberation Sans, sans-serif" font-size="5.3" fill="#e0d6d6">Silent Partner</text>
<!-- controls -->
<g fill="#fff"><rect x="27.4" y="257" width="1.3" height="7.6"/><path d="M35 257 V264.6 L28.9 260.8 Z"/>
<rect x="105.6" y="257" width="1.3" height="7.6"/><path d="M99.3 257 V264.6 L105.4 260.8 Z"/></g>
<circle cx="75.4" cy="253" r="7" fill="#cfc8c8" opacity=".7"/>
<circle cx="66.8" cy="260.8" r="11.4" fill="#fff"/>
<rect x="62.6" y="256.6" width="2.6" height="8.4" fill="#222"/><rect x="68.2" y="256.6" width="2.6" height="8.4" fill="#222"/>
<path d="M66.8 260.8 H78 M66.8 260.8 C66.8 254 70 250 74 248" fill="none" stroke="#bdbdbd" stroke-width=".5"/>
</svg>
<div style="left:582px;top:725.5px;width:183px;height:25px;background:#6a4ee8"></div>
<div class="db" style="left:581.5px;top:725px;width:184px;height:26px;"></div>
<div class="t" style="left:582px;top:732px;width:183px;text-align:center;font-size:11.7px;font-weight:bold;color:#fff">Try interaction</div>
<div class="db" style="left:581.5px;top:750.5px;width:184px;height:22.5px;"></div>
<div class="db" style="left:630px;top:757px;width:87px;height:15px;"></div>
<div class="t" style="left:633.5px;top:759.7px;width:87px;text-align:left;font-size:9.6px;font-style:italic;color:#222">Learn interaction</div>
<svg style="left:0;top:0" width="1209" height="880" viewBox="0 0 1209 880"><path d="M636.7 790.5 A30 30 0 0 1 606.9 760.5 V170.4 A30 30 0 0 1 636.9 140.4 H668.5 A5.3 5.3 0 0 1 673.8 145.7 V150 A14.4 14.4 0 0 0 688.2 164.4 H823.5" fill="none" stroke="#adadad" stroke-width=".85"/></svg>
<div style="left:522px;top:138px;width:302.4px;height:653.4px;border:2px solid rgba(118,92,232,.5)"></div>
<div style="left:522.5px;top:138.5px;width:301.4px;height:652.4px;border:1px dashed rgba(170,150,250,.75)"></div>
<div style="left:520px;top:136px;width:7px;height:7px;background:#fff;border:1px solid #8466f2"></div>
<div style="left:820px;top:136px;width:7px;height:7px;background:#fff;border:1px solid #8466f2"></div>
<div style="left:520px;top:787px;width:7px;height:7px;background:#fff;border:1px solid #8466f2"></div>
<div style="left:820px;top:787px;width:7px;height:7px;background:#fff;border:1px solid #8466f2"></div>
<div style="left:521.5px;top:139px;width:4px;height:1px;background:#222"></div><div style="left:523px;top:137.5px;width:1px;height:4px;background:#222"></div>
<div style="left:535px;top:121px;width:64px;height:26.5px;background:#1e1e1e;border-radius:4px;box-shadow:0 2px 5px rgba(0,0,0,.5)"></div>
<div style="left:566px;top:123px;width:1px;height:22px;background:#2a2a2a"></div>
<svg style="left:544px;top:129px" width="12" height="11" viewBox="0 0 12 11"><path d="M11.5 5.5 H1 M5.6 .7 L.9 5.5 L5.6 10.3" fill="none" stroke="#e6e6e6" stroke-width="1.5"/></svg>
<svg style="left:577px;top:129px" width="12" height="11" viewBox="0 0 12 11"><path d="M.5 5.5 H11 M6.4 .7 L11.1 5.5 L6.4 10.3" fill="none" stroke="#5c5c5c" stroke-width="1.5"/></svg>
<div class="t" style="left:607.5px;top:125.5px;font-size:11.3px;color:#b2b2b2">Cover</div>
<div style="left:535px;top:821px;width:94px;height:27.5px;background:#1e1e1e;border-radius:3px"></div>
<div style="left:541.5px;top:834px;width:8.5px;height:1.3px;background:#a8a8a8"></div>
<div class="t" style="left:552px;top:829px;width:60px;text-align:center;font-size:12.6px;font-weight:bold;color:#e2e2e2">80%</div>
<svg style="left:613.5px;top:830px" width="9" height="9" viewBox="0 0 9 9"><path d="M4.5 0 V9 M0 4.5 H9" stroke="#a8a8a8" stroke-width="1.2" fill="none"/></svg>
<div style="left:791px;top:817px;width:32px;height:32px;border-radius:16px;background:#1e1e1e"></div>
<div class="t" style="left:791px;top:826.5px;width:32px;text-align:center;font-size:13.5px;font-weight:bold;color:#e8e8e8">?</div>
<!-- ============ INTERACTION PANEL ============ -->
<div style="left:839px;top:105px;width:143px;height:760px;background:#1e1e1e"></div>
<div style="left:839px;top:126px;width:4.3px;height:518.5px;background:#2c2c2c"></div>
<div style="left:843.3px;top:126px;width:17.5px;height:739px;background:#1b1b1b"></div>
<div style="left:839px;top:105px;width:94px;height:21px;background:#353535"></div>
<svg style="left:846px;top:112.5px" width="7.8" height="5.4" viewBox="0 0 7.8 5.4"><path d="M0 0 H7.8 L3.9 5.4 Z" fill="#9c9c9c"/></svg>
<div class="t" style="left:861px;top:108.5px;font-size:12px;font-weight:bold;color:#f2f2f2">Cover inte...</div>
<div style="left:861px;top:127.5px;width:72px;height:32.6px;background:#383838"></div>
<div style="left:861px;top:161.1px;width:72px;height:1.6px;background:#343434"></div>
<div style="left:861px;top:163.7px;width:72px;height:3px;background:#303030;border-radius:0 0 2px 2px"></div>
<svg style="left:848.8px;top:138.8px" width="5" height="6.6" viewBox="0 0 5 6.6"><path d="M0 0 L5 3.3 L0 6.6 Z" fill="#b4b4b4"/></svg>
<svg style="left:870px;top:136.7px" width="14" height="13" viewBox="0 0 14 13"><path d="M.6 1.2 L7 7.6 L12.8 1.8 M8.6 1.1 H13.3 V5.8" fill="none" stroke="#f0f0f0" stroke-width="1.4"/><path d="M0 12 H14" stroke="#9a9a9a" stroke-width="1.6"/></svg>
<div class="t" style="left:890px;top:137.1px;width:9px;overflow:hidden;font-size:13px;color:#e8e8e8">T.</div>
<svg style="left:910px;top:140.5px" width="15" height="5" viewBox="0 0 15 5"><path d="M0 2.5 H15" stroke="#c45cc0" stroke-width="2.2"/><path d="M.5 1.3 l1 -1.3 l1 1.3 l1 -1.3 l1 1.3 l1 -1.3 l1 1.3 l1 -1.3 l1 1.3 l1 -1.3 l1 1.3 l1 -1.3 l1 1.3 l1 -1.3 l1 1.3" fill="none" stroke="#c45cc0" stroke-width=".8"/></svg>
<div class="t" style="left:940.5px;top:138.9px;font-size:10px;color:#b8b8b8">0</div>
<div class="t" style="left:976.8px;top:138.9px;font-size:10px;color:#b8b8b8;width:4.7px;overflow:hidden">0</div>
<svg style="left:942.5px;top:154.4px;overflow:hidden" width="39" height="4.2" viewBox="0 0 39 4.2"><g fill="#8f8f8f"><rect x="0.00" y="0" width="1" height="4.2"/><rect x="4.09" y="2.4" width="1" height="1.8"/><rect x="8.18" y="2.4" width="1" height="1.8"/><rect x="12.27" y="2.4" width="1" height="1.8"/><rect x="16.36" y="2.4" width="1" height="1.8"/><rect x="20.45" y="0" width="1" height="4.2"/><rect x="24.54" y="2.4" width="1" height="1.8"/><rect x="28.63" y="2.4" width="1" height="1.8"/><rect x="32.72" y="2.4" width="1" height="1.8"/><rect x="36.81" y="2.4" width="1" height="1.8"/></g></svg>
<div style="left:861px;top:180.4px;width:72px;height:32.6px;background:#383838"></div>
<div style="left:861px;top:214.0px;width:72px;height:1.6px;background:#343434"></div>
<div style="left:861px;top:216.6px;width:72px;height:3px;background:#303030;border-radius:0 0 2px 2px"></div>
<svg style="left:848.8px;top:191.8px" width="5" height="6.6" viewBox="0 0 5 6.6"><path d="M0 0 L5 3.3 L0 6.6 Z" fill="#b4b4b4"/></svg>
<svg style="left:870px;top:189.4px" width="16" height="15" viewBox="0 0 16 15"><path d="M8.5 12.4 H.9 V.9 H13.1 V7.5" fill="none" stroke="#9a9a9a" stroke-width="1.7"/><path d="M8.6 8.4 L15.2 11 L12.6 12 L14.9 14.6 L13.8 15.4 L11.6 12.8 L10.3 15 Z" fill="#f4f4f4"/></svg>
<div class="t" style="left:890px;top:190.1px;width:8.6px;overflow:hidden;font-size:13px;color:#e8e8e8">M</div>
<svg style="left:910px;top:193.4px" width="15" height="5" viewBox="0 0 15 5"><path d="M0 2.5 H15" stroke="#c45cc0" stroke-width="2.2"/><path d="M.5 1.3 l1 -1.3 l1 1.3 l1 -1.3 l1 1.3 l1 -1.3 l1 1.3 l1 -1.3 l1 1.3 l1 -1.3 l1 1.3 l1 -1.3 l1 1.3 l1 -1.3 l1 1.3" fill="none" stroke="#c45cc0" stroke-width=".8"/></svg>
<div class="t" style="left:940.5px;top:191.8px;font-size:10px;color:#b8b8b8">0</div>
<div class="t" style="left:976.8px;top:191.8px;font-size:10px;color:#b8b8b8;width:4.7px;overflow:hidden">0</div>
<svg style="left:942.5px;top:207.3px;overflow:hidden" width="39" height="4.2" viewBox="0 0 39 4.2"><g fill="#8f8f8f"><rect x="0.00" y="0" width="1" height="4.2"/><rect x="4.09" y="2.4" width="1" height="1.8"/><rect x="8.18" y="2.4" width="1" height="1.8"/><rect x="12.27" y="2.4" width="1" height="1.8"/><rect x="16.36" y="2.4" width="1" height="1.8"/><rect x="20.45" y="0" width="1" height="4.2"/><rect x="24.54" y="2.4" width="1" height="1.8"/><rect x="28.63" y="2.4" width="1" height="1.8"/><rect x="32.72" y="2.4" width="1" height="1.8"/><rect x="36.81" y="2.4" width="1" height="1.8"/></g></svg>
<div style="left:861px;top:233.4px;width:72px;height:32.6px;background:#383838"></div>
<div style="left:861px;top:267.0px;width:72px;height:1.6px;background:#343434"></div>
<div style="left:861px;top:269.6px;width:72px;height:3px;background:#303030;border-radius:0 0 2px 2px"></div>
<svg style="left:848.8px;top:244.7px" width="5" height="6.6" viewBox="0 0 5 6.6"><path d="M0 0 L5 3.3 L0 6.6 Z" fill="#b4b4b4"/></svg>
<svg style="left:870px;top:242.4px" width="16" height="15" viewBox="0 0 16 15"><path d="M8 12.4 H.9 V.9 H13.1 V7" fill="none" stroke="#9a9a9a" stroke-width="1.7"/><path d="M9.3 14 L14 9.3" fill="none" stroke="#f4f4f4" stroke-width="1.6"/><path d="M15.3 8 V13.2 L10.2 8 Z" fill="#f4f4f4"/></svg>
<div class="t" style="left:890px;top:243.0px;width:8.6px;overflow:hidden;font-size:13px;color:#e8e8e8">M</div>
<svg style="left:910px;top:246.4px" width="15" height="5" viewBox="0 0 15 5"><path d="M0 2.5 H15" stroke="#c45cc0" stroke-width="2.2"/><path d="M.5 1.3 l1 -1.3 l1 1.3 l1 -1.3 l1 1.3 l1 -1.3 l1 1.3 l1 -1.3 l1 1.3 l1 -1.3 l1 1.3 l1 -1.3 l1 1.3 l1 -1.3 l1 1.3" fill="none" stroke="#c45cc0" stroke-width=".8"/></svg>
<div class="t" style="left:940.5px;top:244.8px;font-size:10px;color:#b8b8b8">0</div>
<div class="t" style="left:976.8px;top:244.8px;font-size:10px;color:#b8b8b8;width:4.7px;overflow:hidden">0</div>
<svg style="left:942.5px;top:260.3px;overflow:hidden" width="39" height="4.2" viewBox="0 0 39 4.2"><g fill="#8f8f8f"><rect x="0.00" y="0" width="1" height="4.2"/><rect x="4.09" y="2.4" width="1" height="1.8"/><rect x="8.18" y="2.4" width="1" height="1.8"/><rect x="12.27" y="2.4" width="1" height="1.8"/><rect x="16.36" y="2.4" width="1" height="1.8"/><rect x="20.45" y="0" width="1" height="4.2"/><rect x="24.54" y="2.4" width="1" height="1.8"/><rect x="28.63" y="2.4" width="1" height="1.8"/><rect x="32.72" y="2.4" width="1" height="1.8"/><rect x="36.81" y="2.4" width="1" height="1.8"/></g></svg>
<div style="left:861px;top:286.4px;width:72px;height:32.6px;background:#383838"></div>
<div style="left:861px;top:320.0px;width:72px;height:1.6px;background:#343434"></div>
<div style="left:861px;top:322.6px;width:72px;height:3px;background:#303030;border-radius:0 0 2px 2px"></div>
<svg style="left:848.8px;top:297.7px" width="5" height="6.6" viewBox="0 0 5 6.6"><path d="M0 0 L5 3.3 L0 6.6 Z" fill="#b4b4b4"/></svg>
<svg style="left:870px;top:295.6px" width="14" height="13" viewBox="0 0 14 13"><path d="M.6 1.2 L7 7.6 L12.8 1.8 M8.6 1.1 H13.3 V5.8" fill="none" stroke="#f0f0f0" stroke-width="1.4"/><path d="M0 12 H14" stroke="#9a9a9a" stroke-width="1.6"/></svg>
<div class="t" style="left:890px;top:296.0px;width:9px;overflow:hidden;font-size:13px;color:#e8e8e8">T.</div>
<svg style="left:910.5px;top:299.4px" width="14" height="5" viewBox="0 0 14 5"><rect x="0" y=".4" width="14" height="4" rx=".5" fill="#d65a82"/><rect x=".6" y="1.5" width="12.8" height="1.9" fill="#fdeef2"/></svg>
<div class="t" style="left:940.5px;top:297.8px;font-size:10px;color:#b8b8b8">0</div>
<div class="t" style="left:976.8px;top:297.8px;font-size:10px;color:#b8b8b8;width:4.7px;overflow:hidden">0</div>
<svg style="left:942.5px;top:313.2px;overflow:hidden" width="39" height="4.2" viewBox="0 0 39 4.2"><g fill="#8f8f8f"><rect x="0.00" y="0" width="1" height="4.2"/><rect x="4.09" y="2.4" width="1" height="1.8"/><rect x="8.18" y="2.4" width="1" height="1.8"/><rect x="12.27" y="2.4" width="1" height="1.8"/><rect x="16.36" y="2.4" width="1" height="1.8"/><rect x="20.45" y="0" width="1" height="4.2"/><rect x="24.54" y="2.4" width="1" height="1.8"/><rect x="28.63" y="2.4" width="1" height="1.8"/><rect x="32.72" y="2.4" width="1" height="1.8"/><rect x="36.81" y="2.4" width="1" height="1.8"/></g></svg>
<div style="left:861px;top:339.3px;width:72px;height:32.6px;background:#383838"></div>
<div style="left:861px;top:372.9px;width:72px;height:1.6px;background:#343434"></div>
<div style="left:861px;top:375.5px;width:72px;height:3px;background:#303030;border-radius:0 0 2px 2px"></div>
<svg style="left:848.8px;top:350.6px" width="5" height="6.6" viewBox="0 0 5 6.6"><path d="M0 0 L5 3.3 L0 6.6 Z" fill="#b4b4b4"/></svg>
<svg style="left:870px;top:348.3px" width="16" height="15" viewBox="0 0 16 15"><path d="M8.5 12.4 H.9 V.9 H13.1 V7.5" fill="none" stroke="#9a9a9a" stroke-width="1.7"/><path d="M8.6 8.4 L15.2 11 L12.6 12 L14.9 14.6 L13.8 15.4 L11.6 12.8 L10.3 15 Z" fill="#f4f4f4"/></svg>
<div class="t" style="left:890px;top:348.9px;width:8.6px;overflow:hidden;font-size:13px;color:#e8e8e8">M</div>
<svg style="left:910.5px;top:352.3px" width="14" height="5" viewBox="0 0 14 5"><rect x="0" y=".4" width="14" height="4" rx=".5" fill="#d65a82"/><rect x=".6" y="1.5" width="12.8" height="1.9" fill="#fdeef2"/></svg>
<div class="t" style="left:940.5px;top:350.7px;font-size:10px;color:#b8b8b8">0</div>
<div class="t" style="left:976.8px;top:350.7px;font-size:10px;color:#b8b8b8;width:4.7px;overflow:hidden">0</div>
<svg style="left:942.5px;top:366.2px;overflow:hidden" width="39" height="4.2" viewBox="0 0 39 4.2"><g fill="#8f8f8f"><rect x="0.00" y="0" width="1" height="4.2"/><rect x="4.09" y="2.4" width="1" height="1.8"/><rect x="8.18" y="2.4" width="1" height="1.8"/><rect x="12.27" y="2.4" width="1" height="1.8"/><rect x="16.36" y="2.4" width="1" height="1.8"/><rect x="20.45" y="0" width="1" height="4.2"/><rect x="24.54" y="2.4" width="1" height="1.8"/><rect x="28.63" y="2.4" width="1" height="1.8"/><rect x="32.72" y="2.4" width="1" height="1.8"/><rect x="36.81" y="2.4" width="1" height="1.8"/></g></svg>
<div style="left:861px;top:392.2px;width:72px;height:32.6px;background:#383838"></div>
<div style="left:861px;top:425.9px;width:72px;height:1.6px;background:#343434"></div>
<div style="left:861px;top:428.4px;width:72px;height:3px;background:#303030;border-radius:0 0 2px 2px"></div>
<svg style="left:848.8px;top:403.6px" width="5" height="6.6" viewBox="0 0 5 6.6"><path d="M0 0 L5 3.3 L0 6.6 Z" fill="#b4b4b4"/></svg>
<svg style="left:870px;top:401.2px" width="16" height="15" viewBox="0 0 16 15"><path d="M8 12.4 H.9 V.9 H13.1 V7" fill="none" stroke="#9a9a9a" stroke-width="1.7"/><path d="M9.3 14 L14 9.3" fill="none" stroke="#f4f4f4" stroke-width="1.6"/><path d="M15.3 8 V13.2 L10.2 8 Z" fill="#f4f4f4"/></svg>
<div class="t" style="left:890px;top:401.9px;width:8.6px;overflow:hidden;font-size:13px;color:#e8e8e8">M</div>
<svg style="left:910.5px;top:405.2px" width="14" height="5" viewBox="0 0 14 5"><rect x="0" y=".4" width="14" height="4" rx=".5" fill="#d65a82"/><rect x=".6" y="1.5" width="12.8" height="1.9" fill="#fdeef2"/></svg>
<div class="t" style="left:940.5px;top:403.7px;font-size:10px;color:#b8b8b8">0</div>
<div class="t" style="left:976.8px;top:403.7px;font-size:10px;color:#b8b8b8;width:4.7px;overflow:hidden">0</div>
<svg style="left:942.5px;top:419.1px;overflow:hidden" width="39" height="4.2" viewBox="0 0 39 4.2"><g fill="#8f8f8f"><rect x="0.00" y="0" width="1" height="4.2"/><rect x="4.09" y="2.4" width="1" height="1.8"/><rect x="8.18" y="2.4" width="1" height="1.8"/><rect x="12.27" y="2.4" width="1" height="1.8"/><rect x="16.36" y="2.4" width="1" height="1.8"/><rect x="20.45" y="0" width="1" height="4.2"/><rect x="24.54" y="2.4" width="1" height="1.8"/><rect x="28.63" y="2.4" width="1" height="1.8"/><rect x="32.72" y="2.4" width="1" height="1.8"/><rect x="36.81" y="2.4" width="1" height="1.8"/></g></svg>
<div style="left:861px;top:445.2px;width:72px;height:32.6px;background:#383838"></div>
<div style="left:861px;top:478.8px;width:72px;height:1.6px;background:#343434"></div>
<div style="left:861px;top:481.4px;width:72px;height:3px;background:#303030;border-radius:0 0 2px 2px"></div>
<svg style="left:848.8px;top:456.5px" width="5" height="6.6" viewBox="0 0 5 6.6"><path d="M0 0 L5 3.3 L0 6.6 Z" fill="#b4b4b4"/></svg>
<svg style="left:870px;top:454.4px" width="14" height="13" viewBox="0 0 14 13"><path d="M.6 1.2 L7 7.6 L12.8 1.8 M8.6 1.1 H13.3 V5.8" fill="none" stroke="#f0f0f0" stroke-width="1.4"/><path d="M0 12 H14" stroke="#9a9a9a" stroke-width="1.6"/></svg>
<div class="t" style="left:890px;top:454.8px;width:9px;overflow:hidden;font-size:13px;color:#e8e8e8">T.</div>
<svg style="left:910.5px;top:452.7px" width="14" height="17" viewBox="0 0 14 17"><path d="M8.8 1 L1.3 9.8 H6.5 L5.3 16 L12.8 7 H7.6 Z" fill="none" stroke="#5ec4b6" stroke-width="1.5" stroke-linejoin="round"/></svg>
<div class="t" style="left:940.5px;top:456.6px;font-size:10px;color:#b8b8b8">0</div>
<div class="t" style="left:976.8px;top:456.6px;font-size:10px;color:#b8b8b8;width:4.7px;overflow:hidden">0</div>
<svg style="left:942.5px;top:472.1px;overflow:hidden" width="39" height="4.2" viewBox="0 0 39 4.2"><g fill="#8f8f8f"><rect x="0.00" y="0" width="1" height="4.2"/><rect x="4.09" y="2.4" width="1" height="1.8"/><rect x="8.18" y="2.4" width="1" height="1.8"/><rect x="12.27" y="2.4" width="1" height="1.8"/><rect x="16.36" y="2.4" width="1" height="1.8"/><rect x="20.45" y="0" width="1" height="4.2"/><rect x="24.54" y="2.4" width="1" height="1.8"/><rect x="28.63" y="2.4" width="1" height="1.8"/><rect x="32.72" y="2.4" width="1" height="1.8"/><rect x="36.81" y="2.4" width="1" height="1.8"/></g></svg>
<div style="left:861px;top:498.2px;width:72px;height:32.6px;background:#383838"></div>
<div style="left:861px;top:531.8px;width:72px;height:1.6px;background:#343434"></div>
<div style="left:861px;top:534.4px;width:72px;height:3px;background:#303030;border-radius:0 0 2px 2px"></div>
<svg style="left:848.8px;top:509.5px" width="5" height="6.6" viewBox="0 0 5 6.6"><path d="M0 0 L5 3.3 L0 6.6 Z" fill="#b4b4b4"/></svg>
<svg style="left:870px;top:507.4px" width="14" height="13" viewBox="0 0 14 13"><path d="M.6 1.2 L7 7.6 L12.8 1.8 M8.6 1.1 H13.3 V5.8" fill="none" stroke="#f0f0f0" stroke-width="1.4"/><path d="M0 12 H14" stroke="#9a9a9a" stroke-width="1.6"/></svg>
<div class="t" style="left:890px;top:507.8px;width:9px;overflow:hidden;font-size:13px;color:#e8e8e8">T.</div>
<svg style="left:910.5px;top:505.7px" width="14" height="17" viewBox="0 0 14 17"><path d="M8.8 1 L1.3 9.8 H6.5 L5.3 16 L12.8 7 H7.6 Z" fill="none" stroke="#5ec4b6" stroke-width="1.5" stroke-linejoin="round"/></svg>
<div class="t" style="left:940.5px;top:509.6px;font-size:10px;color:#b8b8b8">0</div>
<div class="t" style="left:976.8px;top:509.6px;font-size:10px;color:#b8b8b8;width:4.7px;overflow:hidden">0</div>
<svg style="left:942.5px;top:525.1px;overflow:hidden" width="39" height="4.2" viewBox="0 0 39 4.2"><g fill="#8f8f8f"><rect x="0.00" y="0" width="1" height="4.2"/><rect x="4.09" y="2.4" width="1" height="1.8"/><rect x="8.18" y="2.4" width="1" height="1.8"/><rect x="12.27" y="2.4" width="1" height="1.8"/><rect x="16.36" y="2.4" width="1" height="1.8"/><rect x="20.45" y="0" width="1" height="4.2"/><rect x="24.54" y="2.4" width="1" height="1.8"/><rect x="28.63" y="2.4" width="1" height="1.8"/><rect x="32.72" y="2.4" width="1" height="1.8"/><rect x="36.81" y="2.4" width="1" height="1.8"/></g></svg>
<div style="left:861px;top:551.1px;width:72px;height:32.6px;background:#383838"></div>
<div style="left:861px;top:584.7px;width:72px;height:1.6px;background:#343434"></div>
<div style="left:861px;top:587.3px;width:72px;height:3px;background:#303030;border-radius:0 0 2px 2px"></div>
<svg style="left:848.8px;top:562.4px" width="5" height="6.6" viewBox="0 0 5 6.6"><path d="M0 0 L5 3.3 L0 6.6 Z" fill="#b4b4b4"/></svg>
<svg style="left:870px;top:560.3px" width="14" height="13" viewBox="0 0 14 13"><path d="M.6 1.2 L7 7.6 L12.8 1.8 M8.6 1.1 H13.3 V5.8" fill="none" stroke="#f0f0f0" stroke-width="1.4"/><path d="M0 12 H14" stroke="#9a9a9a" stroke-width="1.6"/></svg>
<div class="t" style="left:890px;top:560.7px;width:9px;overflow:hidden;font-size:13px;color:#e8e8e8">T.</div>
<svg style="left:910.5px;top:558.6px" width="14" height="17" viewBox="0 0 14 17"><path d="M8.8 1 L1.3 9.8 H6.5 L5.3 16 L12.8 7 H7.6 Z" fill="none" stroke="#5ec4b6" stroke-width="1.5" stroke-linejoin="round"/></svg>
<div class="t" style="left:940.5px;top:562.5px;font-size:10px;color:#b8b8b8">0</div>
<div class="t" style="left:976.8px;top:562.5px;font-size:10px;color:#b8b8b8;width:4.7px;overflow:hidden">0</div>
<svg style="left:942.5px;top:578.0px;overflow:hidden" width="39" height="4.2" viewBox="0 0 39 4.2"><g fill="#8f8f8f"><rect x="0.00" y="0" width="1" height="4.2"/><rect x="4.09" y="2.4" width="1" height="1.8"/><rect x="8.18" y="2.4" width="1" height="1.8"/><rect x="12.27" y="2.4" width="1" height="1.8"/><rect x="16.36" y="2.4" width="1" height="1.8"/><rect x="20.45" y="0" width="1" height="4.2"/><rect x="24.54" y="2.4" width="1" height="1.8"/><rect x="28.63" y="2.4" width="1" height="1.8"/><rect x="32.72" y="2.4" width="1" height="1.8"/><rect x="36.81" y="2.4" width="1" height="1.8"/></g></svg>
<div style="left:861px;top:604.0px;width:72px;height:32.6px;background:#383838"></div>
<div style="left:861px;top:637.6px;width:72px;height:1.6px;background:#343434"></div>
<div style="left:861px;top:640.2px;width:72px;height:3px;background:#303030;border-radius:0 0 2px 2px"></div>
<svg style="left:848.8px;top:615.3px" width="5" height="6.6" viewBox="0 0 5 6.6"><path d="M0 0 L5 3.3 L0 6.6 Z" fill="#b4b4b4"/></svg>
<svg style="left:869px;top:616.0px" width="16" height="8" viewBox="0 0 16 8"><path d="M5.6 .8 H4.2 a3.2 3.2 0 0 0 0 6.4 H5.6 M10.4 .8 H11.8 a3.2 3.2 0 0 1 0 6.4 H10.4 M4.8 4 H11.2" fill="none" stroke="#f0f0f0" stroke-width="1.5" stroke-linecap="round"/></svg>
<div class="t" style="left:890px;top:613.6px;width:12px;overflow:hidden;font-size:13px;color:#e8e8e8">C</div>
<svg style="left:910px;top:612.5px" width="17" height="15" viewBox="0 0 17 15"><circle cx="7.5" cy="7.5" r="7.4" fill="#f4f4f4"/><circle cx="7.5" cy="3.7" r="1.5" fill="#333"/><circle cx="7.5" cy="11.3" r="1.5" fill="#333"/><circle cx="3.7" cy="7.5" r="1.5" fill="#333"/><circle cx="11.3" cy="7.5" r="1.5" fill="#333"/><circle cx="7.5" cy="7.5" r=".8" fill="#333"/><path d="M9 14.5 H16.5" stroke="#f4f4f4" stroke-width="1"/></svg>
<div class="t" style="left:940.5px;top:615.4px;font-size:10px;color:#b8b8b8">0</div>
<svg style="left:942.5px;top:630.9px;overflow:hidden" width="39" height="4.2" viewBox="0 0 39 4.2"><g fill="#8f8f8f"><rect x="0.00" y="0" width="1" height="4.2"/><rect x="4.09" y="2.4" width="1" height="1.8"/><rect x="8.18" y="2.4" width="1" height="1.8"/><rect x="12.27" y="2.4" width="1" height="1.8"/><rect x="16.36" y="2.4" width="1" height="1.8"/><rect x="20.45" y="0" width="1" height="4.2"/><rect x="24.54" y="2.4" width="1" height="1.8"/><rect x="28.63" y="2.4" width="1" height="1.8"/><rect x="32.72" y="2.4" width="1" height="1.8"/><rect x="36.81" y="2.4" width="1" height="1.8"/></g></svg>
<div style="left:861px;top:661px;width:72px;height:30px;background:#343434"></div>
<div class="t lt" style="left:861px;top:655.5px;width:72px;text-align:center;font-size:13.6px;color:#ececec">Add Trigge</div>
<div class="t lt" style="left:861px;top:683.5px;width:72px;text-align:center;font-size:13.6px;color:#ececec">r</div>
<!-- ============ PROPERTIES PANEL ============ -->
<div style="left:981.5px;top:105px;width:218.5px;height:760px;background:#1e1e1e"></div>
<div style="left:981.5px;top:105px;width:1.5px;height:760px;background:#191919"></div>
<svg style="left:920px;top:778px;opacity:.08" width="46" height="51" viewBox="0 0 46 51"><path d="M4.2 1.3 H41.8 a3 3 0 0 1 3 3 V33.6 a3 3 0 0 1 -3 3 H30.4 L28.9 48.2 a1.2 1.2 0 0 1 -2 .6 L15.6 36.6 H4.2 a3 3 0 0 1 -3 -3 V4.3 a3 3 0 0 1 3 -3 Z" fill="none" stroke="#fff" stroke-width="2.4" stroke-linejoin="round"/><path d="M6.3 15.8 H38.6 M7.4 15.8 V18.4 a5.3 5.3 0 0 0 10.6 0 V15.8 M26.6 15.8 V18.4 a5.3 5.3 0 0 0 10.6 0 V15.8" fill="none" stroke="#fff" stroke-width="2.2"/></svg>
<div class="t" style="left:979px;top:785.5px;font-size:22.3px;font-weight:bold;letter-spacing:1px;transform:scaleX(1.1);transform-origin:0 0;color:#fff;opacity:.08">ПАРТНЕРКИН</div>
<svg style="left:0;top:0" width="1209" height="880" viewBox="0 0 1209 880">
<g fill="#5c5c5c"><rect x="994.2" y="113" width="1.2" height="13.7"/><rect x="1006.6" y="113" width="1.2" height="13.7"/><rect x="998.8" y="116.5" width="4.4" height="6.6"/>
<rect x="1018.3" y="113" width="13.7" height="1.2"/><rect x="1018.3" y="125.6" width="13.7" height="1.2"/><rect x="1021" y="117.8" width="8.3" height="4.2"/></g>
<rect x="1042" y="111.5" width="1" height="16" fill="#2c2c2c"/>
<g fill="#9a9a9a"><rect x="1054.6" y="113" width="1.3" height="13.7"/><rect x="1084" y="113" width="1.3" height="13.7"/><rect x="1112.8" y="113" width="1.3" height="13.7"/>
<rect x="1125.5" y="114.2" width="13.4" height="1.3"/><rect x="1149" y="119.3" width="13.8" height="1.3"/><rect x="1173" y="124.8" width="13.8" height="1.3"/></g>
<g fill="#f2f2f2"><rect x="1057.3" y="117.5" width="9.6" height="4.4"/><rect x="1077.8" y="117.5" width="13.6" height="4.4"/><rect x="1102" y="117.5" width="9.4" height="4.4"/>
<rect x="1130" y="116.2" width="4.2" height="10"/><rect x="1153.6" y="113" width="4.2" height="13.7"/><rect x="1177.8" y="113.6" width="4.2" height="9.8"/></g>
</svg>
<div style="left:989.5px;top:143px;width:202.5px;height:41.8px;background:#2a2a2a;border-radius:4px"></div>
<svg style="left:1000px;top:157px" width="14" height="14" viewBox="0 0 14 14"><rect x=".8" y=".8" width="12.4" height="12.4" rx="1" fill="none" stroke="#e0e0e0" stroke-width="1.7" stroke-dasharray="3.3 2" stroke-dashoffset="1.65"/></svg>
<div class="t" style="left:1023px;top:156.4px;font-size:15.2px;color:#ececec">Cover</div>
<div class="t" style="left:989px;top:205.3px;font-size:12.7px;color:#d4d4d4">Position</div>
<div style="left:1047px;top:199px;width:69.5px;height:25.5px;background:#000;border-radius:2px"></div><div class="t" style="left:1054.0px;top:205.8px;font-size:13.6px;color:#f4f4f4;-webkit-text-stroke:.25px #f4f4f4">-105</div>
<div style="left:1121px;top:199px;width:69px;height:25.5px;background:#000;border-radius:2px"></div><div class="t" style="left:1127.5px;top:205.8px;font-size:13.6px;color:#f4f4f4;-webkit-text-stroke:.25px #f4f4f4">-2</div>
<div class="t" style="left:1082px;top:230.5px;font-size:10.2px;color:#a0a0a0;transform:translateX(-50%)">X</div>
<div class="t" style="left:1155.5px;top:230.5px;font-size:10.2px;color:#a0a0a0;transform:translateX(-50%)">Y</div>
<div class="t" style="left:989px;top:265.7px;font-size:12.7px;color:#d4d4d4">Size</div>
<svg style="left:1055.5px;top:265.5px" width="11" height="13" viewBox="0 0 11 13"><rect x="0" y="6.5" width="8.4" height="6.2" rx=".8" fill="#f0f0f0"/><path d="M5.6 6.5 V4 a2.3 2.3 0 0 1 4.6 0 V5" fill="none" stroke="#f0f0f0" stroke-width="1.4"/></svg>
<div style="left:1076px;top:260px;width:54.7px;height:25.5px;background:#000;border-radius:2px"></div><div class="t" style="left:1082.0px;top:266.8px;font-size:13.6px;color:#f4f4f4;-webkit-text-stroke:.25px #f4f4f4">375</div>
<div style="left:1135px;top:260px;width:55px;height:25.5px;background:#000;border-radius:2px"></div><div class="t" style="left:1140.5px;top:266.8px;font-size:13.6px;color:#f4f4f4;-webkit-text-stroke:.25px #f4f4f4">814</div>
<div class="t" style="left:1104.3px;top:291.2px;font-size:10.2px;color:#a0a0a0;transform:translateX(-50%)">Width</div>
<div class="t" style="left:1162.6px;top:291.2px;font-size:10.2px;color:#a0a0a0;transform:translateX(-50%)">Height</div>
<div class="t" style="left:989px;top:326.5px;font-size:12.7px;color:#d4d4d4">Rotation</div>
<div style="left:1046.7px;top:320.7px;width:28px;height:28px;border-radius:14px;background:#000"></div>
<div style="left:1060px;top:323.3px;width:1.6px;height:1.6px;border-radius:1px;background:#fff"></div>
<div style="left:1095.8px;top:320.7px;width:94.2px;height:25.5px;background:#000;border-radius:2px"></div><div class="t" style="left:1102.0px;top:327.4px;font-size:13.6px;color:#f4f4f4;-webkit-text-stroke:.25px #f4f4f4">0</div>
<div class="t" style="left:1143.7px;top:352.2px;font-size:10.2px;color:#a0a0a0;transform:translateX(-50%)">Angle</div>
<div class="t" style="left:989px;top:387.5px;font-size:12.7px;color:#d4d4d4">Origin</div>
<svg style="left:1047.2px;top:382px" width="25" height="25" viewBox="0 0 25 25"><rect x="0.0" y="0.0" width="7.6" height="7.6" fill="#8f7af5"/><rect x="8.6" y="0.0" width="7.6" height="7.6" fill="#000"/><rect x="17.2" y="0.0" width="7.6" height="7.6" fill="#000"/><rect x="0.0" y="8.6" width="7.6" height="7.6" fill="#000"/><rect x="8.6" y="8.6" width="7.6" height="7.6" fill="#000"/><rect x="17.2" y="8.6" width="7.6" height="7.6" fill="#000"/><rect x="0.0" y="17.2" width="7.6" height="7.6" fill="#000"/><rect x="8.6" y="17.2" width="7.6" height="7.6" fill="#000"/><rect x="17.2" y="17.2" width="7.6" height="7.6" fill="#000"/></svg>
<div style="left:1077px;top:382px;width:54.4px;height:25.5px;background:#000;border-radius:2px"></div><div class="t" style="left:1083.5px;top:388.8px;font-size:13.6px;color:#f4f4f4;-webkit-text-stroke:.25px #f4f4f4">0</div>
<div style="left:1135.8px;top:382px;width:54.2px;height:25.5px;background:#000;border-radius:2px"></div><div class="t" style="left:1141.5px;top:388.8px;font-size:13.6px;color:#f4f4f4;-webkit-text-stroke:.25px #f4f4f4">0</div>
<div class="t" style="left:1105px;top:413.2px;font-size:10.2px;color:#a0a0a0;transform:translateX(-50%)">X</div>
<div class="t" style="left:1163.4px;top:413.2px;font-size:10.2px;color:#a0a0a0;transform:translateX(-50%)">Y</div>
<div style="left:982px;top:444.7px;width:218px;height:1px;background:#151515"></div>
<div class="t" style="left:989px;top:459.4px;font-size:12.7px;color:#d4d4d4">Constraints</div>
<div style="left:989px;top:481.2px;width:71px;height:70.6px;background:#2a2a2a;border-radius:4px"></div>
<div style="left:1017px;top:509px;width:16.3px;height:16px;background:#7e7e7e"></div>
<svg style="left:1021px;top:489px" width="8.4" height="12.4" viewBox="0 0 8.4 12.4"><path d="M0 1.1 H8.4 M4.2 1.1 V12.4" fill="none" stroke="#8f7af5" stroke-width="2.2"/></svg>
<svg style="left:996.6px;top:512.7px" width="12.4" height="8.6" viewBox="0 0 12.4 8.6"><path d="M1.1 0 V8.6 M1.1 4.3 H12.4" fill="none" stroke="#8f7af5" stroke-width="2.2"/></svg>
<svg style="left:1041px;top:512.7px" width="11.3" height="8.6" viewBox="0 0 11.3 8.6"><path d="M10.6 0 V8.6 M10.6 4.3 H0" fill="none" stroke="#5a5a5a" stroke-width="1.3"/></svg>
<svg style="left:1021px;top:532.8px" width="8.4" height="11.3" viewBox="0 0 8.4 11.3"><path d="M0 10.6 H8.4 M4.2 10.6 V0" fill="none" stroke="#5a5a5a" stroke-width="1.3"/></svg>
<div style="left:1068px;top:481.2px;width:32px;height:31.6px;background:#2a2a2a;border-radius:4px"></div>
<svg style="left:1077.5px;top:492.5px" width="13" height="9" viewBox="0 0 13 9"><path d="M1 0 V9 M12 0 V9 M1 4.5 H12" fill="none" stroke="#8f7af5" stroke-width="1.8"/></svg>
<div class="t" style="left:1108px;top:492.0px;font-size:11.8px;color:#d8d8d8">Fixed Width</div>
<div style="left:1068px;top:520.2px;width:32px;height:31.6px;background:#2a2a2a;border-radius:4px"></div>
<svg style="left:1079.5px;top:529.5px" width="9" height="13" viewBox="0 0 9 13"><path d="M0 1 H9 M0 12 H9 M4.5 1 V12" fill="none" stroke="#8f7af5" stroke-width="1.8"/></svg>
<div class="t" style="left:1108px;top:531.2px;font-size:11.8px;color:#d8d8d8">Fixed Height</div>
<div style="left:982px;top:564.7px;width:218px;height:1px;background:#151515"></div>
<div class="t" style="left:989px;top:597.3px;font-size:12.7px;color:#d4d4d4">Opacity</div>
<div style="left:1047px;top:603px;width:67px;height:2px;background:#8f7af5"></div>
<div style="left:1112.8px;top:598.5px;width:11px;height:11px;border-radius:6px;border:2.2px solid #8f7af5;background:#1e1e1e"></div>
<div style="left:1133px;top:591px;width:57px;height:25.5px;background:#000;border-radius:2px"></div><div class="t" style="left:1138.5px;top:597.8px;font-size:13.6px;color:#f4f4f4;-webkit-text-stroke:.25px #f4f4f4">100</div>
<div class="t" style="left:989px;top:643.5px;font-size:12.7px;color:#d4d4d4">Radius</div>
<div style="left:1097px;top:637px;width:28px;height:27.7px;background:#000;border-radius:2px"></div>
<svg style="left:1104px;top:644px" width="14" height="14" viewBox="0 0 14 14"><path d="M.9 4.6 V2.6 a1.7 1.7 0 0 1 1.7 -1.7 H4.6 M9.4 .9 H11.4 a1.7 1.7 0 0 1 1.7 1.7 V4.6 M13.1 9.4 V11.4 a1.7 1.7 0 0 1 -1.7 1.7 H9.4 M4.6 13.1 H2.6 a1.7 1.7 0 0 1 -1.7 -1.7 V9.4" fill="none" stroke="#f0f0f0" stroke-width="1.6"/></svg>
<div style="left:1133px;top:637.5px;width:57px;height:27px;background:#000;border-radius:2px"></div><div class="t" style="left:1139.0px;top:645.0px;font-size:13.6px;color:#f4f4f4;-webkit-text-stroke:.25px #f4f4f4">0</div>
<div style="left:982px;top:688.7px;width:218px;height:1px;background:#151515"></div>
<div class="t" style="left:989px;top:707.3px;font-size:12.7px;color:#d4d4d4">Fill</div>
<div style="left:1174.8px;top:705.5px;width:14.6px;height:14.6px;border-radius:2.5px;background:#8a72f4"></div>
<svg style="left:1177.3px;top:709px" width="10" height="8" viewBox="0 0 10 8"><path d="M1 3.8 L3.8 6.6 L9 1.2" fill="none" stroke="#fff" stroke-width="1.7"/></svg>
<div style="left:989px;top:733.2px;width:140px;height:27.6px;background:#000;border-radius:3px"></div>
<div style="left:992px;top:737px;width:20px;height:19.8px;background:#fff;border-radius:2px"></div>
<div class="t" style="left:1016.5px;top:741.0px;font-size:13.6px;color:#f4f4f4;-webkit-text-stroke:.25px #f4f4f4;font-size:13px">#FFFFFF</div>
<svg style="left:1109px;top:741px" width="13" height="13" viewBox="0 0 13 13"><path d="M8 2.2 L10.8 5 M9 1.2 a1.9 1.9 0 0 1 2.8 2.8 L10 5.6 L7.4 3 Z" fill="#f2f2f2" stroke="#f2f2f2" stroke-width="1"/><path d="M7.2 4.4 L1.6 10 L1 12 L3 11.4 L8.6 5.8" fill="none" stroke="#a8a8a8" stroke-width="1.2"/></svg>
<div style="left:1133px;top:733.2px;width:55.2px;height:27.6px;background:#000;border-radius:2px"></div><div class="t" style="left:1138.0px;top:741.0px;font-size:13.6px;color:#f4f4f4;-webkit-text-stroke:.25px #f4f4f4">100</div>
<div class="t" style="left:1059.3px;top:766.5px;font-size:10.2px;color:#a0a0a0;transform:translateX(-50%)">HEX</div>
<div class="t" style="left:1160.7px;top:766.5px;font-size:10.2px;color:#a0a0a0;transform:translateX(-50%)">Fill</div>
<div class="t" style="left:989px;top:792.5px;font-size:12.7px;color:#d4d4d4">Border</div>
<div style="left:1174.8px;top:791.7px;width:14.6px;height:14.4px;border:1.3px solid #b8b8b8;border-radius:2.5px"></div>
<div class="t" style="left:989px;top:829.3px;font-size:12.7px;color:#d4d4d4">Shadow</div>
<div style="left:1174.8px;top:827.6px;width:14.6px;height:14.4px;border:1.3px solid #b8b8b8;border-radius:2.5px"></div>
<!--PANELS-->

</div></div>
</body>
</html>
